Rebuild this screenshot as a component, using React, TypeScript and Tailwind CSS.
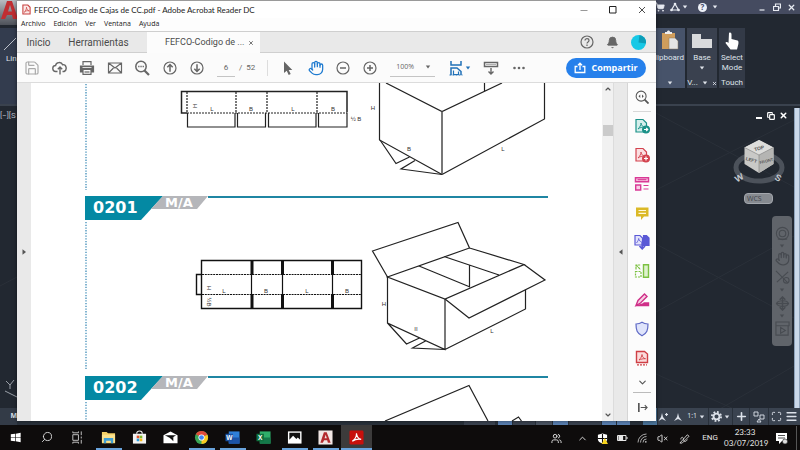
import React from "react";
import {
  ShoppingCart, Bell, Save, ChevronDown, ChevronUp, Hand, Copy, X,
  Menu, Search, Maximize, Plus, VolumeX, Users,
} from "lucide-react";

type IconProps = { children: React.ReactNode; className?: string; box?: string };

function Ico({ children, className = "size-4", box = "0 0 16 16" }: IconProps) {
  return (
    <svg viewBox={box} className={`shrink-0 ${className}`} fill="none" stroke="currentColor" strokeWidth={1.2} aria-hidden="true">
      {children}
    </svg>
  );
}

function IconButton({ label, className = "", children }: { label: string; className?: string; children: React.ReactNode }) {
  return (
    <button type="button" aria-label={label} className={`flex items-center justify-center ${className}`}>
      {children}
    </button>
  );
}

function Caret({ className = "" }: { className?: string }) {
  return (
    <Ico box="0 0 6 4" className={`h-1 w-1.5 ${className}`}>
      <path d="M.8.5h4.4L3 3.5z" fill="currentColor" stroke="none" />
    </Ico>
  );
}

/* ---------- Acrobat ---------- */

function TitleBar() {
  return (
    <header className="flex h-[18px] items-center border-t border-[#9a9a9a] bg-white pr-[10px] pl-[5px]">
      <Ico box="0 0 10 12" className="h-[11px] w-[9px] text-[#c8413f]">
        <path d="M1 1h5.5L9 3.5V11H1z" fill="#fbe9e8" />
        <path d="M2.500 9c1.500-1 2.500-3.500 2.500-5.500C5 5.500 6.500 7.500 8 7.500 6 7 4 7.500 2.500 9z" strokeWidth=".8" />
      </Ico>
      <h1 className="ml-[3px] flex-1 font-['Lato',sans-serif] text-[8px] whitespace-nowrap text-[#222]">FEFCO-Codigo de Cajas de CC.pdf - Adobe Acrobat Reader DC</h1>
      <div className="flex w-[66px] items-center justify-between text-[#222]">
        <IconButton label="Minimizar"><Ico className="size-2" box="0 0 8 8"><path d="M.5 4.500h7" stroke="#999" strokeWidth="1" /></Ico></IconButton>
        <IconButton label="Maximizar"><Ico className="size-2" box="0 0 8 8"><path d="M.5.500h6.500v6.500H.5z" strokeWidth="1" /></Ico></IconButton>
        <IconButton label="Cerrar"><Ico className="size-2" box="0 0 8 8"><path d="M1 1l6 6M7 1L1 7" strokeWidth=".8" /></Ico></IconButton>
      </div>
    </header>
  );
}

function MenuBar() {
  return (
    <nav className="flex h-[13px] items-center gap-2 bg-[#fdfdfd] pl-1 text-[7px] text-[#222]">
      {["Archivo", "Edición", "Ver", "Ventana", "Ayuda"].map((m) => (
        <button key={m} type="button">{m}</button>
      ))}
    </nav>
  );
}

function TabBar() {
  return (
    <div className="flex h-[22px] items-stretch border-y border-[#cfcfcf] bg-[#e9e9e9] font-['Roboto',sans-serif] text-[10px] text-[#4b4b4b]">
      <button type="button" className="w-[43px]">Inicio</button>
      <button type="button" className="w-[77px]">Herramientas</button>
      <div className="ml-[10px] -mb-px flex w-[113px] items-center justify-between bg-[#fcfcfc] pr-[6px] pl-[18px] text-[9px]">
        <button type="button" className="whitespace-nowrap">FEFCO-Codigo de ...</button>
        <IconButton label="Cerrar pestaña"><X size={6} strokeWidth={3} /></IconButton>
      </div>
      <div className="flex flex-1 items-center justify-end gap-3 pr-[10px] text-[#666]">
        <IconButton label="Ayuda">
          <Ico className="size-[14px]" box="0 0 14 14">
            <circle cx="7" cy="7" r="6" />
            <path d="M5 5.500C5 3 9 3 9 5.500 9 7 7 6.800 7 8.500M7 9.600v1.300" />
          </Ico>
        </IconButton>
        <IconButton label="Notificaciones"><Bell size={13} fill="currentColor" strokeWidth={1.500} /></IconButton>
        <IconButton label="Cuenta">
          <Ico className="size-[15px]" box="0 0 16 16">
            <circle cx="8" cy="8" r="8" fill="#16c8e6" stroke="none" />
            <path d="M8 8L9 0a8 8 0 0 1 7 9z" fill="#0d9db8" stroke="none" />
          </Ico>
        </IconButton>
      </div>
    </div>
  );
}

function Toolbar() {
  return (
    <div className="flex h-[30px] items-center border-b border-[#dcdcdc] bg-[#fbfbfb] pr-[10px] pl-[7px] text-[#666]">
      <div className="flex w-[181px] justify-between">
        <IconButton label="Guardar" className="text-[#aaa]"><Save size={16} strokeWidth={1.800} /></IconButton>
        <IconButton label="Subir">
          <Ico><path d="M5.500 11.500H4a3 3 0 0 1-.4-6C4 2 9.500 1.500 10.600 4.700c3.900-.5 4.900 5.300 1.500 6.800h-1.600M8 14.500V7.200M5.800 9.300L8 7l2.200 2.300" strokeWidth="1.400" /></Ico>
        </IconButton>
        <IconButton label="Imprimir">
          <Ico>
            <path d="M1.500 6h13v6h-13z" fill="currentColor" /><path d="M4 5V1.700h8V5" />
            <path d="M4 9.500h8v4.800H4z" fill="#fbfbfb" /><path d="M5.500 12h5" /><path d="M3.500 7.500h9" stroke="#fbfbfb" strokeWidth=".8" />
          </Ico>
        </IconButton>
        <IconButton label="Correo">
          <Ico><path d="M1.500 3h13v10h-13zM1.500 3l6.500 5 6.500-5M1.500 13l5-5M14.500 13l-5-5" /></Ico>
        </IconButton>
        <IconButton label="Buscar">
          <Ico><circle cx="7" cy="6.500" r="5.200" strokeWidth="1.500" /><path d="M10.500 10.500l4.500 4.500" strokeWidth="2.200" /><path d="M4.200 6.500h1.300M6.400 6.500h1.300M8.600 6.500h1.300" strokeWidth="1.400" /></Ico>
        </IconButton>
        <IconButton label="Página anterior">
          <Ico><circle cx="8" cy="8" r="6" /><path d="M8 11.800V4.500M5.300 7.200L8 4.500l2.700 2.700" strokeWidth="1.500" /></Ico>
        </IconButton>
        <IconButton label="Página siguiente">
          <Ico><circle cx="8" cy="8" r="6" /><path d="M8 4.200v7.300M5.300 8.800L8 11.500l2.700-2.700" strokeWidth="1.500" /></Ico>
        </IconButton>
      </div>
      <label className="ml-3 flex items-center gap-1 font-['Roboto',sans-serif] text-[8px]">
        <input aria-label="Página" defaultValue="6" className="h-[18px] w-[18px] border-b border-[#c4c4c4] bg-transparent text-center outline-none" />
        <span className="whitespace-pre">/  52</span>
      </label>
      <span className="ml-3 h-4 w-px bg-[#ddd]" />
      <div className="ml-3 flex w-[98px] justify-between">
        <IconButton label="Seleccionar">
          <Ico><path d="M4 1.500v11.500l2.700-2.300 2 4.300 2-.9-2-4.200h3.600z" fill="currentColor" stroke="none" /></Ico>
        </IconButton>
        <IconButton label="Mano" className="text-[#1f7bd0]"><Hand size={16} strokeWidth={1.900} /></IconButton>
        <IconButton label="Alejar"><Ico><circle cx="8" cy="8" r="6" /><path d="M5 8h6" strokeWidth="1.500" /></Ico></IconButton>
        <IconButton label="Acercar"><Ico><circle cx="8" cy="8" r="6" /><path d="M5 8h6M8 5v6" strokeWidth="1.500" /></Ico></IconButton>
      </div>
      <label className="ml-3 flex w-[45px] items-center border-b border-[#c4c4c4] pr-1">
        <select aria-label="Zoom" className="h-[18px] flex-1 appearance-none bg-transparent pl-[6px] text-[7px] outline-none">
          <option>100%</option>
        </select>
        <Caret />
      </label>
      <IconButton label="Ajustar" className="ml-[13px] gap-px text-[#2272b8]">
        <Ico>
          <path d="M3 1v4h10V1M3 15V8h6l4 3.500V15" strokeWidth="1.500" /><path d="M5.500 10.500v4h5v-3" />
          <path d="M1.500 15h13" strokeDasharray="2 1" />
        </Ico>
        <Caret />
      </IconButton>
      <IconButton label="Desplazamiento" className="ml-3">
        <Ico><path d="M1.500 2.500h13v4h-13z" strokeWidth="1.500" /><path d="M3.500 4.500h9" strokeDasharray="1 1" /><path d="M8 8v6M5.500 11.500L8 14l2.500-2.500" strokeWidth="1.400" /></Ico>
      </IconButton>
      <IconButton label="Más" className="ml-3">
        <Ico><g fill="currentColor" stroke="none"><circle cx="3.500" cy="8" r="1.300" /><circle cx="8" cy="8" r="1.300" /><circle cx="12.500" cy="8" r="1.300" /></g></Ico>
      </IconButton>
      <button type="button" className="ml-auto flex h-5 w-20 items-center justify-center gap-[5px] rounded-full bg-[#2680eb] text-[9px] font-bold text-white">
        <Ico className="size-3" box="0 0 12 12"><path d="M3.500 4.500H1.200v6h9.600v-6H8.500M6 8V1.300M4 3.200l2-2 2 2" strokeWidth="1.300" /></Ico>
        Compartir
      </button>
    </div>
  );
}

function SectionHeading({ code }: { code: string }) {
  return (
    <div className="flex h-6 w-[463px] items-start font-['DejaVu_Sans',sans-serif] font-bold text-white">
      <h2 className="flex h-6 w-[78px] items-center bg-[#0489a3] pl-2 text-[16px] [clip-path:polygon(0_0,100%_0,56px_100%,0_100%)]">{code}</h2>
      <p className="-ml-3 flex h-[13px] w-[57px] items-center bg-[#b5b6ba] pl-[14px] text-[13px] leading-none [clip-path:polygon(12px_0,100%_0,46px_100%,0_100%)]">M/A</p>
      <span className="h-[2px] flex-1 bg-[#1f86a3]" />
    </div>
  );
}

type Label = [string, number, number, boolean?];

function Labels({ items }: { items: Label[] }) {
  return (
    <g fill="#333" stroke="none" fontSize="6" fontFamily="Liberation Sans, sans-serif" textAnchor="middle">
      {items.map(([t, x, y, turned], i) => (
        <text key={i} x={x} y={y} transform={turned ? `rotate(90 ${x} ${y})` : undefined}>{t}</text>
      ))}
    </g>
  );
}

function FigureTop() {
  return (
    <svg viewBox="85 83 517 113" width="517" height="113" className="block shrink-0" fill="none" stroke="#222" strokeWidth="1.200" role="img" aria-label="0200">
      <path d="M86 84v106" stroke="#3f8db8" strokeWidth="1.300" strokeDasharray="1.300 1.400" />
      <path d="M187 91.500h160v21M187 91.500h-5.500v21.500h5.500" strokeWidth="1.500" />
      <path d="M187 92v21h160M236 92v21M267 92v21M317 92v21" strokeDasharray="2 1" />
      <path d="M187.500 113v14h47.500v-14M237.500 113v14h28v-14M268.500 113v14h47.500v-14M318.500 113v14h28.500v-14" />
      <path d="M379.500 83v57L442 174.500M386 83l56 28.500L502 83M484.500 83v8M544.500 83v36L442 174.500" />
      <path d="M442 111.500v63" stroke="#555" strokeWidth="1.600" />
      <path d="M380 140l16 23.500 13.500-6.500M415 160.500l-14 8.500 41 5.500" />
      <Labels items={[["H", 193, 106, true], ["L", 212, 111], ["B", 251, 111], ["L", 293, 111], ["B", 333, 111], ["½ B", 356, 121], ["H", 373, 110], ["B", 409, 151], ["L", 503, 151]]} />
    </svg>
  );
}

function FigureMiddle() {
  return (
    <svg viewBox="85 220 517 156" width="517" height="156" className="block shrink-0" fill="none" stroke="#222" strokeWidth="1.200" role="img" aria-label="0201">
      <path d="M86 222v148" stroke="#3f8db8" strokeWidth="1.300" strokeDasharray="1.300 1.400" />
      <g stroke="#111">
        <path d="M201.500 260.500h160v48h-160zM201.500 274.500h-5v20h5" strokeWidth="1.400" />
        <path d="M202 274.500h160M202 294.500h160" strokeWidth="1" strokeDasharray="2 .8" />
        <path d="M252 261v14M282.500 261v14M332.500 261v14M252 294v14M282.500 294v14M332.500 294v14" strokeWidth="3" />
        <path d="M251.500 275v19M282.500 275v19M332.500 275v19" />
      </g>
      <path d="M387.500 277l-15-26L458 222.500l11.500 25.500L387.500 277 445 299l79-34.500-54.500-16.500M524 264.500l21 15.500-76 38-24-19M419 266l51 21M444 256.500l55 18.500M469.500 265v22" />
      <path d="M387.500 277v46L445 349.500V299M445 349.500L525.500 309V290M387.500 323l19 21 13-6M425.500 341l-13 7 32.500 1.500" />
      <Labels items={[["H", 207, 288, true], ["L", 224, 293], ["B", 266, 293], ["L", 307, 293], ["B", 347, 293], ["½B", 207, 302, true], ["H", 384, 306], ["II", 416, 331], ["L", 492, 333]]} />
    </svg>
  );
}

function FigureBottom() {
  return (
    <svg viewBox="85 400 517 21" width="517" height="21" className="block shrink-0 overflow-visible" fill="none" stroke="#222" strokeWidth="1.200" role="img" aria-label="0202">
      <path d="M86 402v19" stroke="#3f8db8" strokeWidth="1.300" strokeDasharray="1.300 1.400" />
      <path d="M385 421l84-35.500 19 35.500M512 421l6.500-4 3 4" />
    </svg>
  );
}

const tools: { name: string; icon: React.ReactNode }[] = [
  {
    name: "Exportar PDF",
    icon: (
      <g stroke="#1a9188">
        <path d="M2 1.500h7L12.500 5v9H2z" fill="#d5efec" /><path d="M4 11c2-2 3-4 3-6 .5 3 2 4 4 4.200C8 9 6 9.500 4 11z" strokeWidth=".9" />
        <circle cx="12" cy="11.500" r="3.400" fill="#1a9188" /><path d="M10 11.500h3.500M12.200 10l1.500 1.500-1.500 1.500" stroke="#fff" />
      </g>
    ),
  },
  {
    name: "Crear PDF",
    icon: (
      <g stroke="#d3434f">
        <path d="M2 1.500h7L12.500 5v9H2z" fill="#fbdfe1" /><path d="M4 11c2-2 3-4 3-6 .5 3 2 4 4 4.200C8 9 6 9.500 4 11z" strokeWidth=".9" />
        <circle cx="12" cy="11.500" r="3.400" fill="#d3434f" /><path d="M10 11.500h4M12 9.500v4" stroke="#fff" />
      </g>
    ),
  },
  {
    name: "Editar PDF",
    icon: (
      <g stroke="#d93a96">
        <path d="M1.500 1.700h13v4h-13z" fill="#f9cfe6" strokeWidth="1.500" /><path d="M3.500 3.700h9" />
        <path d="M1.700 9h5v5h-5z" fill="#f9cfe6" strokeWidth="1.400" /><path d="M9.500 9.500h5M9.500 13h5" />
      </g>
    ),
  },
  { name: "Comentario", icon: <g stroke="none"><path d="M2 2.500h12.500v9H10l-3 3.500v-3.500H2z" fill="#dbb927" /><path d="M4.500 5.500h7.500M4.500 8.300h7.500" stroke="#fff8d8" /></g> },
  {
    name: "Combinar archivos",
    icon: (
      <g stroke="#5a59d6">
        <path d="M1 1.500h5L8.500 4v7H1z" fill="#e2e2fb" /><path d="M2.500 9C4 7 4.500 6 4.700 4.500 5 6.500 6 7.500 7.500 7.700" strokeWidth=".9" />
        <path d="M9.500 1.500h3L15 4v7.500H9.500z" fill="#5a59d6" /><path d="M8.200 8v6.500M5.500 12l2.700 2.800L11 12" strokeWidth="1.700" />
      </g>
    ),
  },
  {
    name: "Organizar páginas",
    icon: (
      <g stroke="#7cc142">
        <path d="M9.500 1.800h5v12.500h-5z" fill="#def2cd" strokeWidth="1.400" /><path d="M1.500 8.500h5.500v5.500H1.500z" strokeDasharray="2 1" /><path d="M2 2l4.500 4.500M2 6.500V2h4.500" strokeDasharray="2.500 .6" />
      </g>
    ),
  },
  { name: "Rellenar y firmar", icon: <g stroke="#cf2f88"><path d="M2 13.500l2-5L10.500 2l2.500 2.500-6.500 6.500z" fill="#f7cfe3" strokeWidth="1.400" /><path d="M2 13.500h12.500V11H9.500" fill="#cf2f88" strokeWidth="1.400" /></g> },
  { name: "Proteger", icon: <g stroke="#5f6ac6"><path d="M8 1.300c2 1.400 4 1.700 6 1.700 0 6-1 9.200-6 11.800C3 12.200 2 9 2 3c2 0 4-.3 6-1.700z" fill="#dfe4fb" /></g> },
  {
    name: "Comprimir PDF",
    icon: (
      <g stroke="#cf3f45">
        <path d="M2.500 1.500h8L13.500 4v8.500h-11z" fill="#fbdcdc" strokeWidth="1.400" /><path d="M5 10c2-2 2.700-3.500 3-5.500.3 2.500 1.500 4 3.500 4.200C9 8.700 7 9 5 10z" strokeWidth=".9" /><path d="M3 14.800h10" strokeDasharray="2 1" />
      </g>
    ),
  },
];

function ToolsPane() {
  return (
    <aside className="flex w-[29px] flex-col border-l border-[#d5d5d5] bg-[#fcfcfc] text-[#555]">
      <IconButton label="Buscar herramientas" className="h-7">
        <Ico className="size-[14px]"><circle cx="7" cy="7" r="5.700" /><path d="M11 11l4.500 4.500" strokeWidth="2" /><path d="M6 5L4 7l2 2zM8 5l2 2-2 2z" fill="currentColor" stroke="none" /></Ico>
      </IconButton>
      <hr className="mx-[5px] border-[#d8d8d8]" />
      <div className="flex flex-1 flex-col">
        {tools.map((t) => (
          <IconButton key={t.name} label={t.name} className="flex-1"><Ico>{t.icon}</Ico></IconButton>
        ))}
      </div>
      <IconButton label="Más herramientas" className="h-5"><ChevronDown size={11} strokeWidth={2.500} /></IconButton>
      <hr className="mx-[5px] border-[#bbb]" />
      <IconButton label="Expandir panel" className="h-7">
        <Ico className="size-[11px]" box="0 0 12 12"><path d="M2 1v10" strokeWidth="1.800" /><path d="M4 6h7M8.500 3.500L11 6 8.500 8.500" /></Ico>
      </IconButton>
    </aside>
  );
}

function AcrobatWindow() {
  return (
    <section className="absolute top-0 right-36 bottom-1 left-[17px] z-10 flex flex-col bg-white shadow-[0_0_4px_rgba(0,0,0,0.5)]">
      <TitleBar />
      <MenuBar />
      <TabBar />
      <Toolbar />
      <div className="flex min-h-0 flex-1">
        <IconButton label="Mostrar panel izquierdo" className="w-[14px] bg-[#e9e9e9] text-[#555]">
          <Ico box="0 0 4 6" className="h-1.5 w-1"><path d="M.5.300v5.400L4 3z" fill="currentColor" stroke="none" /></Ico>
        </IconButton>
        <main className="min-w-0 flex-1 overflow-hidden pl-[54px]">
          <FigureTop />
          <SectionHeading code="0201" />
          <FigureMiddle />
          <SectionHeading code="0202" />
          <FigureBottom />
        </main>
        <div className="flex w-[11px] flex-col items-center bg-[#f1f1f1] text-[#555]">
          <ChevronUp size={8} strokeWidth={3.500} className="mt-[2px]" />
          <span className="mt-8 h-[11px] w-[10px] bg-[#cbcbcb]" />
          <ChevronDown size={8} strokeWidth={3.500} className="mt-auto mb-[2px]" />
        </div>
        <IconButton label="Ocultar panel derecho" className="w-[14px] border-l border-[#dcdcdc] bg-[#e9e9e9] text-[#555]">
          <Ico box="0 0 4 6" className="h-1.5 w-1"><path d="M3.500.300v5.400L0 3z" fill="currentColor" stroke="none" /></Ico>
        </IconButton>
        <ToolsPane />
      </div>
    </section>
  );
}

/* ---------- AutoCAD ---------- */

function CadTitle() {
  return (
    <div className="flex h-[14px] items-center bg-[#454b60] pr-1 text-[#e8ebf2]">
      <div className="ml-auto flex items-center">
        <ShoppingCart size={10} fill="currentColor" />
        <Ico className="ml-[5px] size-[10px]" box="0 0 10 10"><path d="M5 2L1.500 8h7z" /><g fill="currentColor" stroke="none"><circle cx="5" cy="2" r="1.300" /><circle cx="1.500" cy="8" r="1.300" /><circle cx="8.500" cy="8" r="1.300" /></g></Ico>
        <Caret className="ml-[2px]" />
        <span className="ml-[10px] flex size-[9px] items-center justify-center rounded-full bg-[#eef1f8] text-[8px] leading-none font-bold text-[#3e4a6a]">?</span>
        <Caret className="ml-[5px]" />
      </div>
      <div className="ml-10 flex w-[38px] items-center justify-between">
        <IconButton label="Minimizar AutoCAD"><Ico className="size-2" box="0 0 8 8"><path d="M1.500 7h5" /></Ico></IconButton>
        <IconButton label="Restaurar AutoCAD"><Ico className="size-2" box="0 0 8 8"><path d="M.5 3.500h5v4h-5zM2.500 3V1h5v4H6" /></Ico></IconButton>
        <IconButton label="Cerrar AutoCAD"><X size={9} strokeWidth={3.500} /></IconButton>
      </div>
    </div>
  );
}

function CadRibbon() {
  return (
    <div className="flex h-[92px] items-start justify-between border-b-2 border-[#3a424e] bg-[#222831] pt-[14px] font-['Roboto',sans-serif] text-[8px] leading-[10px] text-[#dfe3ea]">
      <div className="flex h-[76px] w-[17px] flex-col bg-[#333c4e]">
        <Ico className="mt-[10px] ml-1 h-4 w-[13px]" box="0 0 13 16"><path d="M0 12L12 0" strokeWidth=".8" /></Ico>
        <span className="ml-[6px]">Lin</span>
      </div>
      <div className="flex gap-0.5 pr-[55px]">
        <button type="button" className="flex h-[60px] w-[31px] flex-col items-center bg-[#47536a]">
          <Ico className="mt-[2px] h-5 w-[18px]" box="0 0 18 20">
            <path d="M1 3h13v16H1z" fill="#cf9d5c" stroke="none" /><path d="M4 4V2h2c0-2 3-2 3 0h2v2z" fill="#eee" stroke="none" />
            <path d="M8 8h6l3 3v8H8z" fill="#e4e4e4" stroke="#8a7a60" strokeWidth=".5" />
          </Ico>
          <span className="mt-[3px]">lipboard</span>
          <Caret className="mt-auto mb-[3px]" />
        </button>
        <button type="button" className="flex h-[60px] w-[30px] flex-col items-center bg-[#3a414f]">
          <Ico className="mt-[2px] h-5 w-[22px]" box="0 0 22 20"><path d="M1 4h9v5h11v9H1z" fill="#d9dadc" stroke="none" /></Ico>
          <span className="mt-[3px]">Base</span>
          <Caret className="mt-[3px]" />
          <span className="mt-auto flex items-center gap-1 whitespace-nowrap">V... <Caret /><X size={5} strokeWidth={4} /></span>
        </button>
        <button type="button" className="flex h-[60px] w-[26px] flex-col items-center bg-[#333a47]">
          <Ico className="mt-[3px] h-5 w-4" box="0 0 16 20"><path d="M5 2c1.500-1 2.500 0 2.500 1.500V8l6 1.500c1.500.5 1 3.500.5 5L13 18.500H6.500L1.500 12c0-1.500 2-1.500 3 0z" fill="#fff" stroke="none" /></Ico>
          <span className="mt-[2px]">Select<br />Mode</span>
          <span className="mt-auto">Touch</span>
        </button>
      </div>
    </div>
  );
}

function ViewCube() {
  return (
    <svg viewBox="732 137 56 50" width="56" height="50" fill="none" role="img" aria-label="ViewCube">
      <ellipse cx="759" cy="167.500" rx="23" ry="13.500" stroke="#4c525b" strokeWidth="5" />
      <path d="M759 140l14.500 7.500v16.500L759 173l-14.500-9v-16.500z" fill="#c9c9c7" />
      <path d="M759 140l14.500 7.500L759 155l-14.500-7.500z" fill="#dddddb" />
      <path d="M759 155l14.500-7.500v16.500L759 173z" fill="#b5b5b3" />
      <path d="M744.500 147.500L759 155l14.500-7.500M759 155v18" stroke="#888" strokeWidth=".7" />
      <g fill="#555" fontSize="5" fontWeight="700" fontFamily="Liberation Sans, sans-serif">
        <text x="754" y="150" transform="rotate(-15 759 148)">TOP</text>
        <text x="745.500" y="160" fontSize="4.500" transform="rotate(14 745 160)">LEFT</text>
        <text x="760" y="164" fontSize="4" transform="rotate(-14 760 164)">FRONT</text>
      </g>
      <g fill="#c4c8ce" fontSize="9" fontWeight="700" fontFamily="Liberation Sans, sans-serif">
        <text x="735" y="181" transform="rotate(-30 739 178)">W</text><text x="775" y="181" transform="rotate(30 778 178)">S</text>
      </g>
    </svg>
  );
}

function CadCanvas() {
  return (
    <div className="relative flex min-h-0 flex-1 justify-between bg-[#222831] text-[#b9bec6]">
      <svg className="absolute inset-0 size-full" viewBox="0 0 800 304" preserveAspectRatio="xMaxYMin slice" fill="none" stroke="#2a3039" aria-hidden="true">
        <path d="M656 7l138 74M656 84L794 14M656 138l138 74M656 206l138-76M656 268l138 62M656 340l138-80M0 180l17-9" />
      </svg>
      <div className="relative flex w-[17px] flex-col text-[8px]">
        <span className="mt-[4px] font-['Roboto',sans-serif] whitespace-nowrap">[−][S</span>
        <Ico className="mt-auto mb-2 ml-[5px] h-[22px] w-3" box="0 0 12 22"><path d="M1 3l4 4 4-5M5 7v4M0 13l12 6" strokeWidth=".8" /></Ico>
      </div>
      <div className="relative flex">
        <div className="flex w-[68px] flex-col items-end">
          <div className="mt-[5px] mr-[5px] flex w-[33px] items-center justify-between text-white">
            <Ico className="size-2" box="0 0 8 8"><path d="M1 6h6" strokeWidth="2" /></Ico>
            <Copy size={8} strokeWidth={3.500} />
            <X size={9} strokeWidth={4} />
          </div>
          <div className="mt-[17px] mr-[5px]"><ViewCube /></div>
          <button type="button" className="mt-1.5 mr-5 h-[11px] w-[29px] rounded-sm border border-[#a3a7ad] bg-[#868a90] pl-0.5 text-left text-[7px] leading-[8px] text-[#3f444b]">WCS</button>
          <div className="mt-3 mr-px flex h-[130px] w-5 flex-col items-center justify-around rounded-sm bg-[#60646a] py-2 text-[#474b51]">
            <Ico className="size-[15px]"><circle cx="8" cy="8" r="6.500" /><circle cx="8" cy="8" r="3.500" /><path d="M3 14h10" /></Ico>
            <Caret />
            <Hand size={15} />
            <Ico className="size-[15px]"><path d="M1 1l13 13M14 2L2 13" /><circle cx="12" cy="11" r="3" /></Ico>
            <Caret />
            <Ico className="size-[15px]"><path d="M8 1v14M1 8h14M5 4l3-3 3 3M5 12l3 3 3-3" strokeWidth="1.600" /><ellipse cx="8" cy="8" rx="6" ry="3" /></Ico>
            <Caret />
            <Ico className="size-[15px]"><path d="M1 1h14v4H1zM1 5h13v10H1zM6 7l5 3-5 3z" /></Ico>
          </div>
        </div>
        <div className="mt-[2px] ml-[1px] w-[6px] border-x border-[#8fa3ba] bg-[#cbd9ea]" />
      </div>
    </div>
  );
}

function CadStatus() {
  return (
    <div className="flex h-[17px] items-stretch justify-between bg-[#29313b] text-[#dde2ea]">
      <span className="flex w-[17px] items-center justify-end bg-[#333b47] text-[7px] font-bold">M</span>
      <div className="flex items-stretch gap-px text-[7px]">
        <span className="w-[31px] bg-[#3b4350]" /><span className="ml-0.5 w-[14px] bg-[#5a80b2]" />
        <span className="w-[22px] bg-[#3b4350]" /><span className="w-[16px] bg-[#4c5563]" />
        <span className="w-[15px] bg-[#5a80b2]" /><span className="w-[32px] bg-[#3b4350]" />
        <span className="w-[14px] bg-[#5a80b2]" /><span className="w-[13px] bg-[#5a80b2]" />
        <span className="ml-3 w-[14px] bg-[#4a7399]" />
        <div className="flex w-[50px] items-center justify-between bg-[#3a4350] pr-[3px]">
          <Ico className="size-[10px]" box="0 0 10 10"><path d="M4 1l1 4 3 4-4-2-3.500 2L3 5z" fill="currentColor" stroke="none" /><path d="M7 2.500h3M8.500 1v3" /></Ico>
          <Ico className="size-[10px]" box="0 0 10 10"><path d="M5 1l1 4 3 4-4-2-4 2 3-4z" fill="currentColor" stroke="none" /></Ico>
          <span className="flex items-center gap-[2px]">1:1<Caret /></span>
        </div>
        <div className="flex w-[23px] items-center justify-between bg-[#3a4350] px-[2px]">
          <Ico className="size-[11px]" box="0 0 12 12"><circle cx="6" cy="6" r="3.200" strokeWidth="2" /><circle cx="6" cy="6" r="5" strokeWidth="2" strokeDasharray="1.960 1.960" /></Ico>
          <Caret />
        </div>
        <div className="flex w-[16px] items-center justify-center bg-[#3a4350]"><Plus size={13} strokeWidth={3} /></div>
        <div className="flex w-[18px] items-center justify-center bg-[#3a4350]">
          <Ico className="size-[12px]" box="0 0 12 12"><path d="M1 1h4v4H1zM7 4h4v4H7zM4 11l2-3 2 3z" strokeWidth=".9" /></Ico>
        </div>
        <div className="flex w-[31px] items-center justify-between bg-[#3a4350] px-[2px]"><Maximize size={11} /><Menu size={13} strokeWidth={3} /></div>
      </div>
    </div>
  );
}

function AutoCad() {
  return (
    <section className="flex h-full flex-col">
      <CadTitle />
      <CadRibbon />
      <CadCanvas />
      <CadStatus />
      <div className="absolute top-0 left-0 flex h-[25px] w-[17px] justify-center overflow-hidden bg-linear-to-b from-[#b9bcc2] to-[#4e525a]">
        <Ico className="h-[20px] w-[18px]" box="0 0 18 20"><path d="M1 19L7 1h5l6 18h-5l-1-4H7l-2 4zM8 11.500h4L10 5z" fill="#c02e32" stroke="none" fillRule="evenodd" /></Ico>
      </div>
    </section>
  );
}

/* ---------- Taskbar ---------- */

const apps: { name: string; open?: boolean; active?: boolean; icon: React.ReactNode }[] = [
  { name: "Inicio de Windows", icon: <path d="M3 4.500L7.500 4v3.700H3zM8.200 3.900L13.500 3v4.700H8.200zM3 8.300h4.500V12L3 11.500zM8.200 8.300h5.300V13l-5.300-.9z" fill="#fff" stroke="none" /> },
  { name: "Buscar en Windows", icon: <Search size={13} x={1} y={1} color="#ddd" transform="scale(-1 1) translate(-16 0)" strokeWidth={1.800} /> },
  { name: "Vista de tareas", icon: <path d="M3 5h6v6H3zM3 1.500V3h6V1.500M3 14.500V13h6v1.500M12 1.500v4M12 7v2M12 10.500v4" stroke="#ddd" strokeWidth=".9" /> },
  { name: "Explorador", open: true, icon: <g stroke="none"><path d="M1 2h5l1.500 1.500H15V14H1z" fill="#f3cf66" /><path d="M1 5h14v8.500H1z" fill="#fbe28e" /><path d="M3 8.500h10V14h-2.500v-2.500h-5V14H3z" fill="#3f9fd6" /></g> },
  { name: "Microsoft Store", icon: <g stroke="none"><path d="M1 4h14v10.500H1z" fill="#f2f2f2" /><path d="M5 4c0-4 6-4 6 0" stroke="#f2f2f2" /><path d="M5 6h2.800v2.800H5z" fill="#e5532d" /><path d="M8.200 6H11v2.800H8.200z" fill="#7fba2a" /><path d="M5 9.200h2.800V12H5z" fill="#2a9fe5" /><path d="M8.200 9.200H11V12H8.200z" fill="#f7b918" /></g> },
  { name: "Correo de Windows", icon: <g stroke="none"><path d="M.5 5.500L8 1.500l7.500 4V14H.5z" fill="#fff" /><path d="M2 5.500h12L8.500 9z" fill="#111" /><path d="M7.500 8.500L11 12V7.500z" fill="#111" /></g> },
  { name: "Chrome", open: true, icon: <g stroke="none"><circle cx="8" cy="8" r="7" fill="#3aa757" /><path d="M8 8L2 4.500A7 7 0 0 1 14.300 5z" fill="#e04a3a" /><path d="M8 8l6.300-3A7 7 0 0 1 8 15z" fill="#fbc91f" /><circle cx="8" cy="8" r="3.300" fill="#fff" /><circle cx="8" cy="8" r="2.500" fill="#4285f4" /></g> },
  { name: "Word", open: true, icon: <g stroke="none"><path d="M4 1.500h11.500v13H4z" fill="#2f7fd8" /><path d="M4 8h11.500v6.500H4z" fill="#1c54a8" /><path d="M.5 4h8v8h-8z" fill="#184fa0" /><text x="1.300" y="10.500" fontSize="7" fontWeight="700" fill="#fff" fontFamily="Liberation Sans, sans-serif">W</text></g> },
  { name: "Excel", icon: <g stroke="none"><path d="M4 1.500h11.500v13H4z" fill="#2fae6a" /><path d="M9.500 8h6v6.500H4V8z" fill="#14794a" /><path d="M.5 4h8v8h-8z" fill="#10713f" /><text x="2.200" y="10.500" fontSize="7" fontWeight="700" fill="#fff" fontFamily="Liberation Sans, sans-serif">X</text></g> },
  { name: "Fotos", open: true, icon: <g stroke="none"><path d="M1 1.500h14.500v13H1z" fill="#fff" /><path d="M2.500 3h11.500v7.500L11.500 8 10 9.500 6.500 6l-4 4.500z" fill="#111" /></g> },
  { name: "AutoCAD", open: true, icon: <g stroke="none"><path d="M.5.500h15v15H.5z" fill="#f1e6e4" /><path d="M2.500 13.500L6.300 2.500h3l4.200 11h-3l-.7-2.500H6.500l-1.300 2.500zM7 8.800h2.400L8.200 5z" fill="#b32a2e" fillRule="evenodd" /></g> },
  { name: "Acrobat", open: true, active: true, icon: <g stroke="none"><rect x=".5" y=".5" width="15" height="15" rx="1.500" fill="#c8100c" /><path d="M3.500 12c3-2 4.500-5.500 4.500-8.500.3 4 2 6 5 6.500-3.500-.6-6.500 0-9.500 2z" stroke="#fff" fill="none" /></g> },
];

function Taskbar() {
  return (
    <footer className="flex h-[25px] items-stretch justify-between bg-[#0e0c0c] text-[#e6e6e6]">
      <div className="flex">
        {apps.map((a) => (
          <button key={a.name} type="button" aria-label={a.name} className={`flex w-[31px] flex-col items-center justify-between pt-[5px] ${a.active ? "bg-[#3c3b3b]" : ""}`}>
            <Ico className="size-[15px]">{a.icon}</Ico>
            {a.open && <span className={`h-[2px] bg-[#69a3dc] ${a.active ? "w-full" : "w-[26px]"}`} />}
          </button>
        ))}
      </div>
      <div className="flex items-center pt-px">
        <Users size={11} className="mr-[10px]" />
        <span className="flex w-5 justify-center"><ChevronUp size={11} /></span>
        <span className="flex w-5 justify-center"><Ico className="size-[11px]" box="0 0 12 12"><path d="M1 2l5-1.500L11 2v5c0 2-2 3.500-5 4.500C3 10.500 1 9 1 7z" fill="#fff" stroke="none" /><path d="M6 1v10M1 6h10" stroke="#0e0c0c" /><path d="M8.500 5.500L12 12H5z" fill="#f5d21c" stroke="none" /></Ico></span>
        <span className="flex w-5 justify-center"><Ico className="h-2 w-[11px]" box="0 0 11 8"><path d="M.5 1.500h8.500v5H.5zM10 3v2" strokeWidth="1" /><path d="M2 2.500h3.500v3H2z" fill="currentColor" /></Ico></span>
        <span className="flex w-5 justify-center"><Ico className="size-[10px] text-[#bbb]" box="0 0 10 10"><path d="M1 9.500A8.500 8.500 0 0 1 9.500 1M3.500 9.500a6 6 0 0 1 6-6M6 9.500A3.500 3.500 0 0 1 9.500 6" strokeWidth=".9" /><circle cx="8.800" cy="8.800" r=".9" fill="currentColor" stroke="none" /></Ico></span>
        <span className="flex w-5 justify-center"><VolumeX size={11} /></span>
        <span className="flex w-6 justify-center"><Ico className="size-[11px]" box="0 0 12 12"><path d="M1 11L9 2l2 1.500L3.500 11zM2 7c0-3 3-3 3 0s3 3 4 0" strokeWidth=".9" /></Ico></span>
        <span className="w-7 text-center font-['Roboto',sans-serif] text-[8px]">ENG</span>
        <time className="w-[42px] text-center font-['Lato',sans-serif] text-[8px] leading-[11px]">23:33<br />03/07/2019</time>
        <span className="flex w-[30px] justify-center"><Ico className="size-[13px]" box="0 0 13 13"><path d="M1 1h11v8H7l-3 3V9H1z" fill="#fff" stroke="none" /><path d="M3 3.500h7M3 6h7" stroke="#222" strokeWidth=".8" /><circle cx="10" cy="9.500" r="2.500" fill="#ddd" stroke="#222" strokeWidth=".6" /></Ico></span>
        <span className="h-[25px] w-[4px] border-l border-[#555]" />
      </div>
    </footer>
  );
}

export default function App() {
  return (
    <div className="flex h-screen flex-col overflow-hidden font-['Open_Sans','Noto_Sans',sans-serif]">
      <div className="relative min-h-0 flex-1">
        <AutoCad />
        <AcrobatWindow />
      </div>
      <Taskbar />
    </div>
  );
}
